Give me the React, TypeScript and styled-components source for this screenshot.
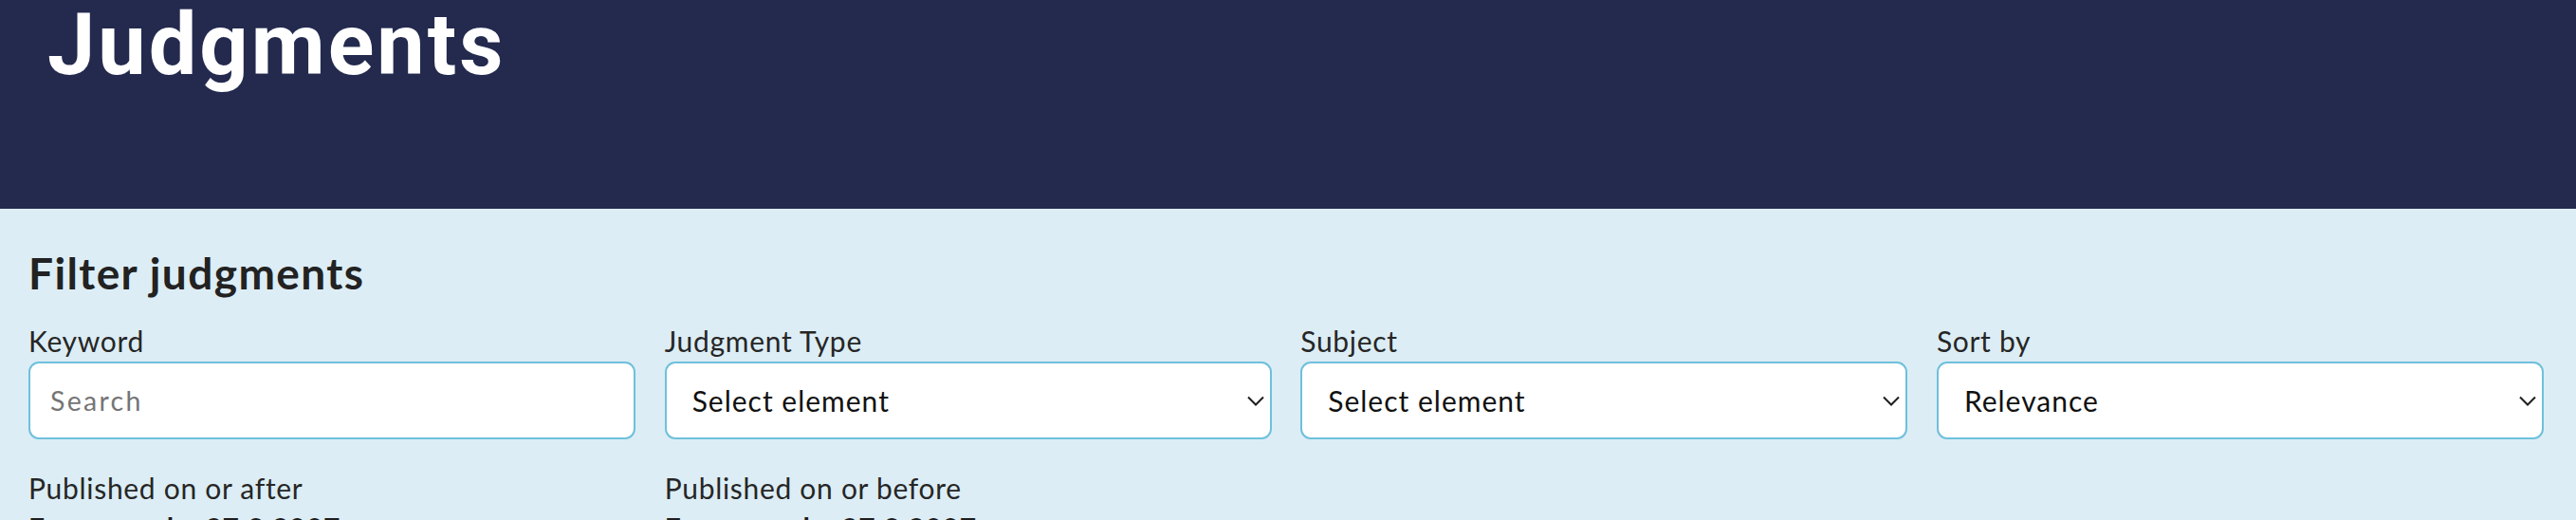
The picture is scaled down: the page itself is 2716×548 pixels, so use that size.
import React from "react";
import styled, { createGlobalStyle } from "styled-components";

const GlobalStyle = createGlobalStyle`
  html, body { margin: 0; padding: 0; }
  body { background: #dcedf5; font-family: "Lato", "Liberation Sans", sans-serif; }
  * { box-sizing: border-box; }
`;

const Header = styled.header`
  background: #232a4e;
  height: 220px;
  padding: 3px 0 0 50px;
`;

const Title = styled.h1`
  margin: 0;
  font-family: "Roboto", "Liberation Sans", sans-serif;
  font-weight: 700;
  font-size: 90px;
  line-height: 90px;
  letter-spacing: 3px;
  color: #ffffff;
`;

const FilterSection = styled.section`
  background: #dcedf5;
  padding: 40px 34px 0 30px;
  height: 328px;
  overflow: hidden;
`;

const FilterHeading = styled.h2`
  margin: 0 0 26px 0;
  font-weight: 700;
  font-size: 46px;
  line-height: 55px;
  letter-spacing: 1.4px;
  color: #222222;
`;

const FieldGrid = styled.div`
  display: grid;
  grid-template-columns: repeat(4, 1fr);
  column-gap: 30.5px;
  row-gap: 33px;
`;

const Field = styled.div`
  display: flex;
  flex-direction: column;
`;

const Label = styled.label`
  font-size: 30px;
  line-height: 36px;
  letter-spacing: 0.7px;
  color: #262626;
  margin-bottom: 4px;
`;

const Hint = styled.div`
  font-size: 30px;
  line-height: 36px;
  font-weight: 700;
  letter-spacing: 0.7px;
  color: #1e1e1e;
  margin-top: 2px;
`;

const boxBase = `
  height: 82px;
  width: 100%;
  background: #ffffff;
  border: 2px solid #6fc0dc;
  border-radius: 11px;
  font-family: "Lato", "Liberation Sans", sans-serif;
`;

const TextInput = styled.input`
  ${boxBase}
  padding: 0 0 0 21px;
  font-size: 28.5px;
  letter-spacing: 2.3px;
  color: #111;
  outline: none;
  &::placeholder { color: #757575; }
`;

const SelectBox = styled.div`
  ${boxBase}
  display: flex;
  align-items: center;
  justify-content: space-between;
  padding: 0 6px 0 27px;
  font-size: 30px;
  letter-spacing: 1px;
  color: #111111;
`;

const Chevron = () => (
  <svg width="18" height="11" viewBox="0 0 18 11" fill="none">
    <path d="M1 1.5 L9 9.5 L17 1.5" stroke="#1e1e1e" strokeWidth="2" />
  </svg>
);

const Select = ({ value }: { value: string }) => (
  <SelectBox role="combobox">
    <span>{value}</span>
    <Chevron />
  </SelectBox>
);

export default function App() {
  return (
    <>
      <GlobalStyle />
      <Header>
        <Title>Judgments</Title>
      </Header>
      <FilterSection>
        <FilterHeading>Filter judgments</FilterHeading>
        <FieldGrid>
          <Field>
            <Label>Keyword</Label>
            <TextInput placeholder="Search" />
          </Field>
          <Field>
            <Label>Judgment Type</Label>
            <Select value="Select element" />
          </Field>
          <Field>
            <Label>Subject</Label>
            <Select value="Select element" />
          </Field>
          <Field>
            <Label>Sort by</Label>
            <Select value="Relevance" />
          </Field>
          <Field>
            <Label>Published on or after</Label>
            <Hint>For example, 27 3 2007</Hint>
          </Field>
          <Field>
            <Label>Published on or before</Label>
            <Hint>For example, 27 3 2007</Hint>
          </Field>
        </FieldGrid>
      </FilterSection>
    </>
  );
}
